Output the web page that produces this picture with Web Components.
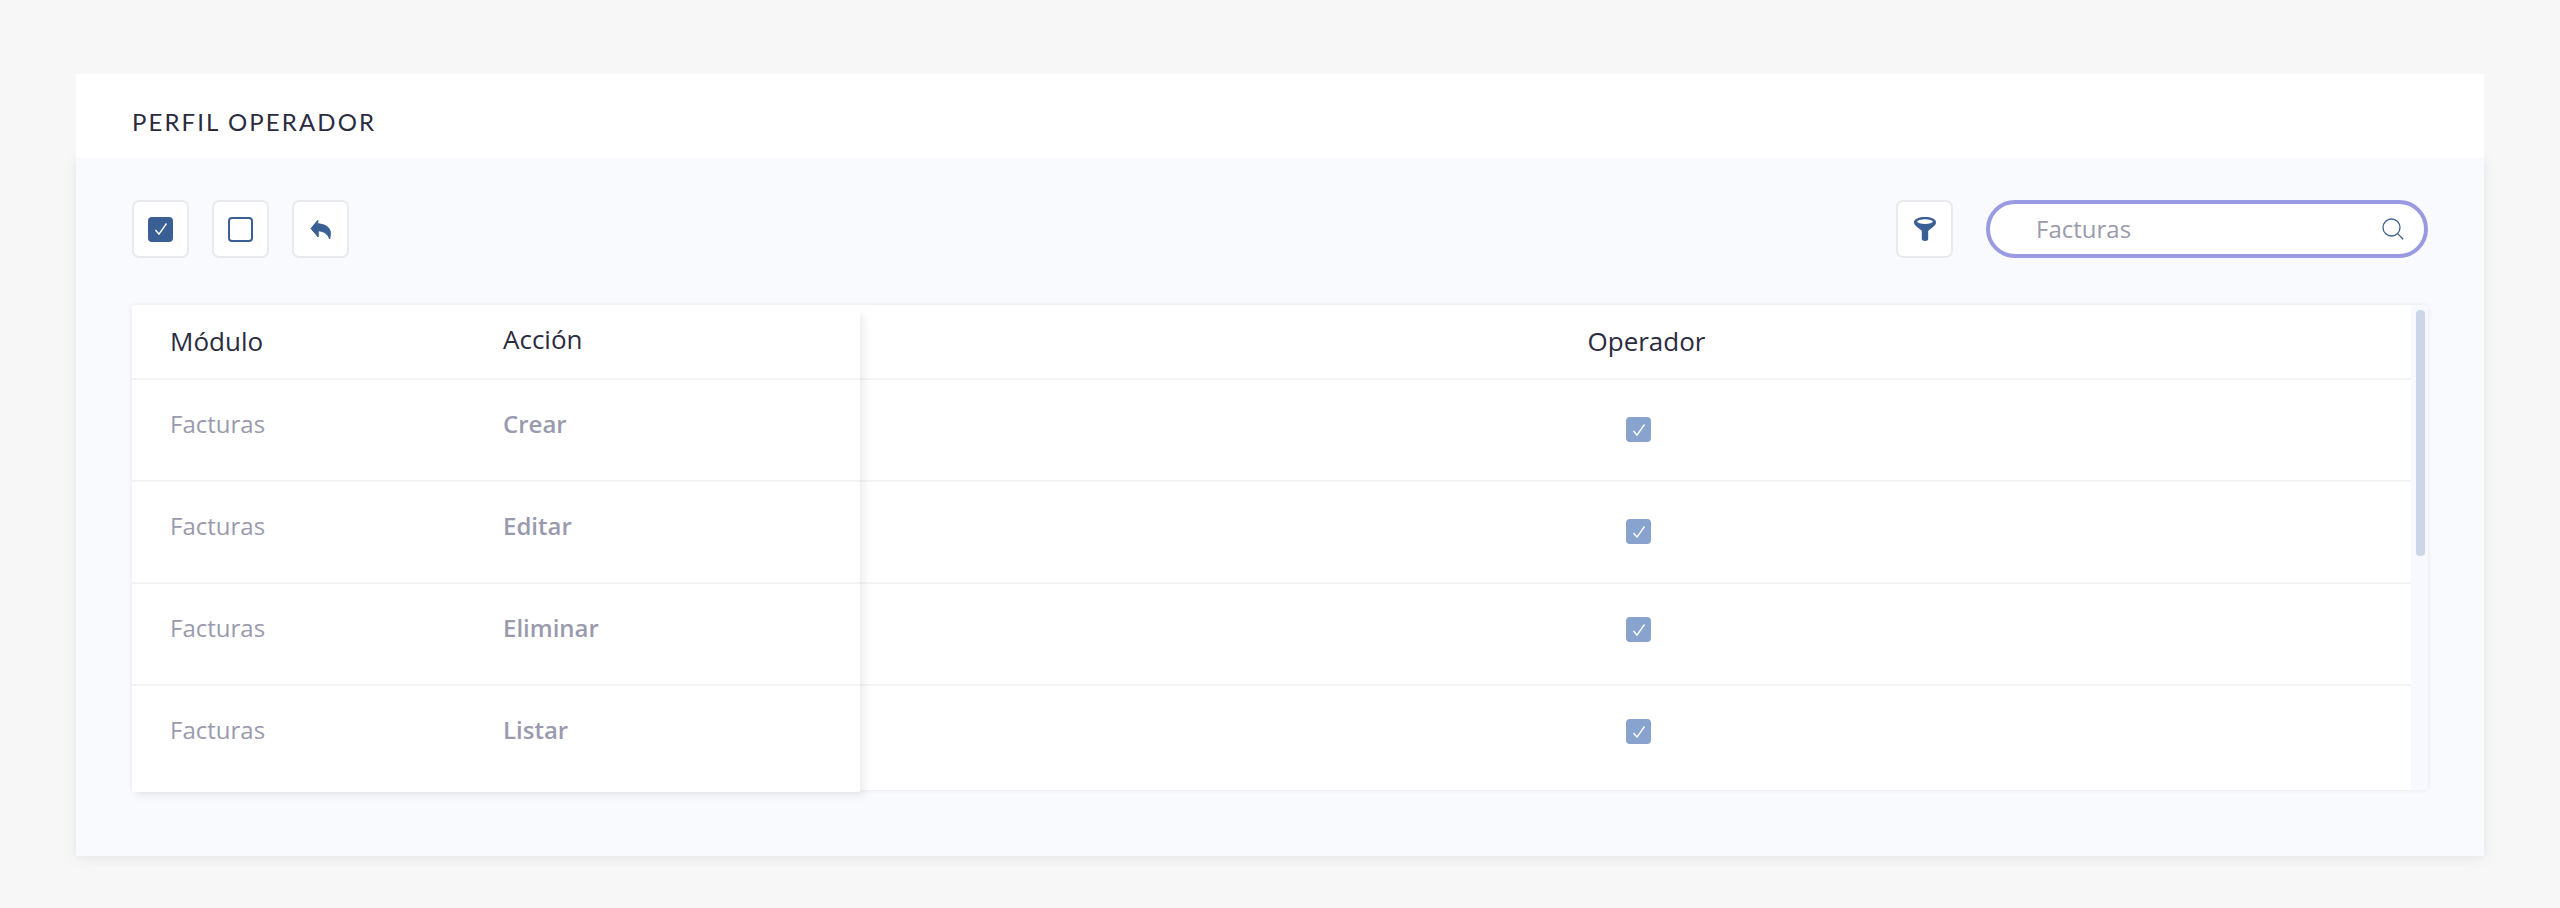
<!DOCTYPE html>
<html lang="es">
<head>
<meta charset="utf-8">
<title>Perfil operador</title>
<style>
    html, body { margin: 0; height: 100%; background: #f7f7f7; }
    body { font-family: 'Open Sans', 'Liberation Sans', sans-serif; }
</style>
</head>
<body>
<profile-page></profile-page>

<script>
const ICONS = {
    reply: '<svg width="21" height="21" viewBox="-0.5 -0.5 21 21"><path fill="#3a5f95" stroke="#3a5f95" stroke-width="1" stroke-linejoin="round" d="M0.500 9L7.300 0.800V4.300C14 4.800 20 7.500 19.800 13.500C19.800 16 19.500 18.300 19.100 19.500C17.500 14.500 13 11.500 7.700 11.300V17.500Z"/></svg>',
    filter: '<svg width="22" height="24" viewBox="0 0 22 24"><path fill="#3a5f95" d="M0 5C0 2 5 0 11 0s11 2 11 5c0 2-1 3.500-3 5l-4.800 3.800V22c0 1.300-1.200 2-3.200 2s-3.200-.7-3.200-2v-8.200L3 10C1 8.500 0 7 0 5z"/><ellipse cx="11" cy="4.600" rx="7.800" ry="2.300" fill="#fff"/></svg>',
    search: '<svg width="22" height="22" viewBox="0 0 22 22" fill="none" stroke="#3f6290" stroke-width="1.300"><circle cx="9.500" cy="9.500" r="8.500"/><path d="M15.600 15.600l5.600 5.600"/></svg>',
    check: '<svg width="14" height="14" viewBox="0 0 14 14" fill="none" stroke="#fff" stroke-width="1.400"><path d="M1.500 8l3.500 4.200L12.500 1.500"/></svg>'
};

class CheckMark extends HTMLElement {
    constructor() {
        super();
        this.attachShadow({ mode: 'open' });
        const filled = !this.hasAttribute('empty');
        this.shadowRoot.innerHTML = `
            <style>
                :host {
                    display: flex;
                    align-items: center;
                    justify-content: center;
                    box-sizing: border-box;
                    width: 25px;
                    height: 25px;
                    border-radius: 4px;
                    background: var(--check-bg, #3a5f95);
                    border: 2px solid var(--check-border, #3a5f95);
                }
                :host([empty]) { background: #fff; }
            </style>
            ${filled ? ICONS.check : ''}
        `;
    }
}

class ToolButton extends HTMLElement {
    constructor() {
        super();
        this.attachShadow({ mode: 'open' });
        this.shadowRoot.innerHTML = `
            <style>
                :host {
                    display: flex;
                    align-items: center;
                    justify-content: center;
                    box-sizing: border-box;
                    width: 57px;
                    height: 58px;
                    background: #fff;
                    border: 2px solid #e9eaee;
                    border-radius: 7px;
                }
            </style>
            <slot></slot>
        `;
    }
}

class SearchBox extends HTMLElement {
    constructor() {
        super();
        this.attachShadow({ mode: 'open' });
        this.shadowRoot.innerHTML = `
            <style>
                :host {
                    display: flex;
                    align-items: center;
                    justify-content: space-between;
                    box-sizing: border-box;
                    width: 442px;
                    height: 58px;
                    padding: 0 20px 0 46px;
                    background: #fff;
                    border: 4px solid #9a9ae2;
                    border-radius: 29px;
                }
                span {
                    color: #9a9aae;
                    font-size: 24px;
                    line-height: 32px;
                    margin-top: -1px;
                }
                svg { display: block; }
            </style>
            <span><slot></slot></span>
            ${ICONS.search}
        `;
    }
}

class DataRow extends HTMLElement {
    constructor() {
        super();
        this.attachShadow({ mode: 'open' });
        this.shadowRoot.innerHTML = `
            <style>
                :host {
                    display: flex;
                    box-sizing: border-box;
                    height: 102px;
                    padding: 28px 0 0 38px;
                    border-bottom: 2px solid #f3f3f5;
                    color: #9a9aae;
                    font-size: 24px;
                    line-height: 32px;
                }
                :host(:last-child) { border-bottom: 0; height: 106px; }
                .module { width: 334px; }
                .action { font-weight: 600; margin-left: -1px; }
            </style>
            <div class="module">${this.getAttribute('module')}</div>
            <div class="action">${this.getAttribute('action')}</div>
        `;
    }
}

class CheckRow extends HTMLElement {
    constructor() {
        super();
        this.attachShadow({ mode: 'open' });
        this.shadowRoot.innerHTML = `
            <style>
                :host {
                    display: flex;
                    justify-content: center;
                    box-sizing: border-box;
                    height: 102px;
                    padding: 37px 0 0 6px;
                    border-bottom: 2px solid #f3f3f5;
                    --check-bg: #88a3cd;
                    --check-border: #88a3cd;
                }
                :host([low]) { padding-top: 33px; }
                :host(:last-child) { border-bottom: 0; height: 104px; }
            </style>
            <check-mark></check-mark>
        `;
    }
}

class PermissionTable extends HTMLElement {
    constructor() {
        super();
        this.attachShadow({ mode: 'open' });
        const rows = ['Crear', 'Editar', 'Eliminar', 'Listar'];
        this.shadowRoot.innerHTML = `
            <style>
                :host {
                    display: flex;
                    box-sizing: border-box;
                    height: 485px;
                    background: #fff;
                    box-shadow: 0 0 5px rgba(0, 0, 0, 0.08);
                    border-radius: 2px;
                }
                .head {
                    display: flex;
                    box-sizing: border-box;
                    border-bottom: 2px solid #f3f3f5;
                    color: #2b2b40;
                    font-size: 26px;
                    line-height: 34px;
                }
                .fixed {
                    position: relative;
                    z-index: 1;
                    box-sizing: border-box;
                    flex: 0 0 728px;
                    height: 481px;
                    margin-top: 6px;
                    background: #fff;
                    box-shadow: 4px 4px 8px rgba(0, 0, 0, 0.07);
                }
                .fixed .head { height: 69px; padding: 13px 0 0 38px; }
                .fixed .head div:first-child { width: 333px; }
                .fixed .head div:last-child { margin-top: -2px; }
                .scroll { flex: 1; min-width: 0; overflow: hidden; height: 485px; }
                .scroll .head { height: 75px; justify-content: center; padding: 19px 0 0 22px; }
                .track {
                    flex: 0 0 17px;
                    padding: 5px 3px 0 5px;
                    box-sizing: border-box;
                    background: #f8f9fe;
                }
                .thumb {
                    height: 246px;
                    border-radius: 4px;
                    background: #cbd7e8;
                }
            </style>
            <div class="fixed">
                <div class="head"><div>Módulo</div><div>Acción</div></div>
                ${rows.map(r => `<data-row module="Facturas" action="${r}"></data-row>`).join('')}
            </div>
            <div class="scroll">
                <div class="head"><div>Operador</div></div>
                ${rows.map((r, i) => `<check-row${i > 1 ? ' low' : ''}></check-row>`).join('')}
            </div>
            <div class="track"><div class="thumb"></div></div>
        `;
    }
}

class ProfilePage extends HTMLElement {
    constructor() {
        super();
        this.attachShadow({ mode: 'open' });
        this.shadowRoot.innerHTML = `
            <style>
                :host {
                    display: block;
                    box-sizing: border-box;
                    padding: 74px 76px 0;
                }
                .title {
                    position: relative;
                    z-index: 1;
                    box-sizing: border-box;
                    height: 84px;
                    padding: 30px 0 0 56px;
                    background: #fff;
                    color: #2b2b40;
                    font-family: Lato, 'Open Sans', sans-serif;
                    font-size: 24px;
                    line-height: 36px;
                    letter-spacing: 2.100px;
                }
                .body {
                    box-sizing: border-box;
                    height: 698px;
                    padding: 42px 56px 0;
                    background: #f8fafe;
                    box-shadow: 0 2px 12px rgba(0, 0, 0, 0.08);
                }
                .toolbar {
                    display: flex;
                    align-items: center;
                    gap: 23px;
                    height: 58px;
                    margin-bottom: 47px;
                }
                .spacer { flex: 1; }
                .toolbar search-box { margin-left: 10px; }
            </style>
            <div class="title">PERFIL OPERADOR</div>
            <div class="body">
                <div class="toolbar">
                    <tool-button><check-mark></check-mark></tool-button>
                    <tool-button><check-mark empty></check-mark></tool-button>
                    <tool-button>${ICONS.reply}</tool-button>
                    <div class="spacer"></div>
                    <tool-button>${ICONS.filter}</tool-button>
                    <search-box>Facturas</search-box>
                </div>
                <permission-table></permission-table>
            </div>
        `;
    }
}

customElements.define('check-mark', CheckMark);
customElements.define('tool-button', ToolButton);
customElements.define('search-box', SearchBox);
customElements.define('data-row', DataRow);
customElements.define('check-row', CheckRow);
customElements.define('permission-table', PermissionTable);
customElements.define('profile-page', ProfilePage);
</script>
</body>
</html>
